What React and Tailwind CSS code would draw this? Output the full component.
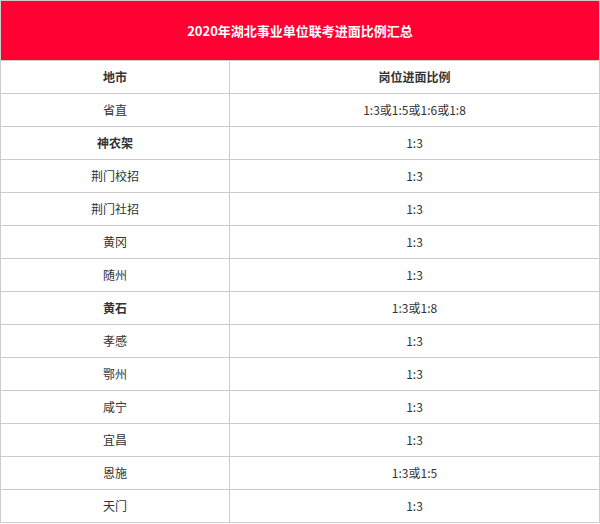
import React from 'react';

const rows = [
  { city: '省直', ratio: '1:3或1:5或1:6或1:8' },
  { city: '神农架', ratio: '1:3', bold: true },
  { city: '荆门校招', ratio: '1:3' },
  { city: '荆门社招', ratio: '1:3' },
  { city: '黄冈', ratio: '1:3' },
  { city: '随州', ratio: '1:3' },
  { city: '黄石', ratio: '1:3或1:8', bold: true },
  { city: '孝感', ratio: '1:3' },
  { city: '鄂州', ratio: '1:3' },
  { city: '咸宁', ratio: '1:3' },
  { city: '宜昌', ratio: '1:3' },
  { city: '恩施', ratio: '1:3或1:5' },
  { city: '天门', ratio: '1:3' }
];

export default function App() {
  return (
    <div
      className="w-[600px] bg-white text-[#333] text-[12px]"
      style={{ fontFamily: '"Microsoft YaHei", "Noto Sans CJK SC", sans-serif' }}
    >
      <div className="border border-[#ccc]">
        {/* Title */}
        <div className="h-[59px] bg-[#ff0033] flex items-center justify-center text-white font-bold text-[13px]">
          2020年湖北事业单位联考进面比例汇总
        </div>

        {/* Header row */}
        <div className="flex h-[33px] border-t border-[#ccc]">
          <div className="w-[229px] border-r border-[#ccc] flex items-center justify-center font-bold">
            地市
          </div>
          <div className="flex-1 flex items-center justify-center font-bold">岗位进面比例</div>
        </div>

        {rows.map((r, i) => (
          <div key={i} className="flex h-[33px] border-t border-[#ccc]">
            <div
              className={`w-[229px] border-r border-[#ccc] flex items-center justify-center ${
                r.bold ? 'font-bold' : ''
              }`}
            >
              {r.city}
            </div>
            <div className="flex-1 flex items-center justify-center">{r.ratio}</div>
          </div>
        ))}
      </div>
    </div>
  );
}
